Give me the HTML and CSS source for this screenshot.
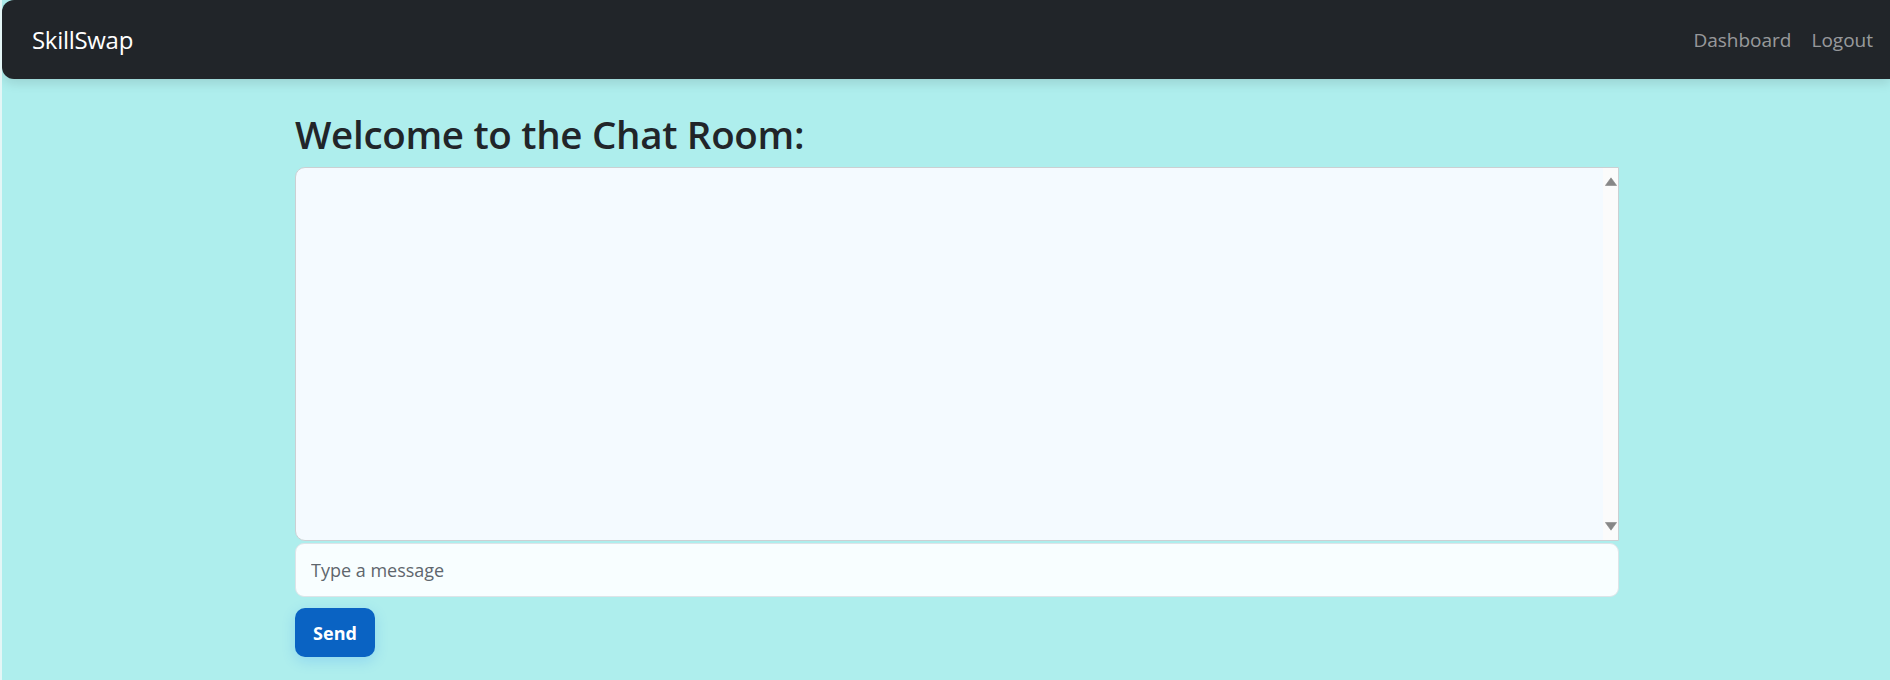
FILE: index.html
```html
<!DOCTYPE html>
<html lang="en">
<head>
<meta charset="utf-8">
<title>SkillSwap - Chat Room</title>
<link rel="stylesheet" href="styles.css">
</head>
<body>
<nav class="navbar">
  <a class="brand" href="#">SkillSwap</a>
  <div class="nav-links">
    <a class="nav-link" href="#">Dashboard</a>
    <a class="nav-link" href="#">Logout</a>
  </div>
</nav>
<main class="chat">
  <h1 class="chat-title">Welcome to the Chat Room:</h1>
  <div class="chat-box">
    <div class="chat-messages"></div>
    <div class="scroll-rail" aria-hidden="true">
      <svg class="arrow" width="12" height="9" viewBox="0 0 12 9"><path d="M6 0.8L11.6 8.5H0.4Z" fill="#878787" stroke="#878787" stroke-width="0.6" stroke-linejoin="round"/></svg>
      <svg class="arrow" width="12" height="9" viewBox="0 0 12 9"><path d="M0.4 0.5H11.6L6 8.2Z" fill="#878787" stroke="#878787" stroke-width="0.6" stroke-linejoin="round"/></svg>
    </div>
  </div>
  <input class="chat-input" type="text" placeholder="Type a message">
  <button class="send-btn" type="button">Send</button>
</main>
</body>
</html>
```

FILE: styles.css
```css
* { box-sizing: border-box; }
html, body { height: 100%; }
body {
  margin: 0;
  background: #aeeeed;
  border-left: 2px solid #e4f6f6;
  font-family: "Open Sans", "Noto Sans", sans-serif;
  color: #212529;
  overflow: hidden;
}
.navbar {
  height: 79px;
  background: #212529;
  border-radius: 12px 0 0 12px;
  display: flex;
  align-items: center;
  justify-content: space-between;
  padding: 0 17px 0 30px;
  box-shadow: 0 4px 12px rgba(0, 0, 0, 0.12);
}
.brand {
  color: #fff;
  text-decoration: none;
  font-size: 24px;
  letter-spacing: -0.3px;
}
.nav-links { display: flex; gap: 20px; }
.nav-link {
  color: rgba(255, 255, 255, 0.55);
  text-decoration: none;
  font-size: 19px;
  letter-spacing: 0;
}
.chat {
  width: 1324px;
  margin-left: 293px;
  display: flex;
  flex-direction: column;
  align-items: flex-start;
}
.chat-title {
  margin: 32px 0 10px;
  font-size: 38.5px;
  font-weight: 600;
  line-height: 1.2;
  letter-spacing: -0.3px;
}
.chat-box {
  width: 100%;
  height: 374px;
  display: flex;
  background: #f4faff;
  border: 1px solid #cbd0d3;
  border-radius: 10px 0 0 10px;
  overflow: hidden;
}
.chat-messages { flex: 1; }
.scroll-rail {
  width: 15px;
  background: #fbfbfb;
  display: flex;
  flex-direction: column;
  justify-content: space-between;
  align-items: center;
  padding: 9px 0 9px;
}
.arrow { display: block; }
.chat-input {
  width: 100%;
  height: 54px;
  margin-top: 2px;
  padding: 0 15px;
  border: 1px solid #dde4e8;
  border-radius: 9px;
  background: #f8feff;
  font-family: inherit;
  font-size: 18px;
  color: #212529;
  outline: none;
}
.chat-input::placeholder { color: #5f666d; }
.send-btn {
  margin-top: 11px;
  width: 80px;
  height: 49px;
  border: none;
  border-radius: 10px;
  background: #0a63c3;
  color: #fff;
  font-family: inherit;
  font-weight: 700;
  font-size: 18px;
  box-shadow: 0 4px 14px rgba(13, 110, 253, 0.18);
  cursor: pointer;
}
```
